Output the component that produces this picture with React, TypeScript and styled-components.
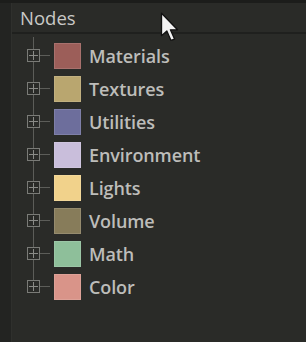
import React from "react";
import styled, { createGlobalStyle } from "styled-components";

const Global = createGlobalStyle`
  html, body { margin: 0; padding: 0; background: #1f201e; }
  body { font-family: "Open Sans", "Liberation Sans", sans-serif; }
`;

const Frame = styled.div`
  width: 306px;
  height: 342px;
  display: flex;
  flex-direction: column;
  background: #1f201e;
  position: relative;
  overflow: hidden;
`;

const TopStrip = styled.div`
  height: 3px;
  background: #1c1d1b;
`;

const Body = styled.div`
  flex: 1;
  display: flex;
`;

const Gutter = styled.div`
  width: 11px;
  background: #232422;
  border-right: 1px solid #2f302d;
`;

const Panel = styled.div`
  flex: 1;
  display: flex;
  flex-direction: column;
  background: #2a2b28;
`;

const Header = styled.div`
  height: 31px;
  display: flex;
  align-items: center;
  padding-left: 8px;
  color: #c9c9c6;
  font-size: 18.5px;
  font-weight: 500;
  letter-spacing: 0;
  border-bottom: 2px solid #1f201e;
  box-sizing: border-box;
`;

const Tree = styled.div`
  position: relative;
  display: flex;
  flex-direction: column;
  padding-top: 5px;
`;

const TreeLine = styled.div`
  position: absolute;
  left: 21px;
  top: 3px;
  bottom: 12px;
  width: 1px;
  background: #5c5d59;
`;

const Row = styled.div`
  height: 33px;
  display: flex;
  align-items: center;
  position: relative;
`;

const Expander = styled.div`
  margin-left: 15px;
  width: 13px;
  height: 13px;
  box-sizing: border-box;
  border: 1px solid #7a7b77;
  background: #2a2b28;
  position: relative;
  z-index: 1;
  &::before {
    content: "";
    position: absolute;
    left: 1px; right: 1px; top: 5px;
    height: 1px;
    background: #8a8b87;
  }
  &::after {
    content: "";
    position: absolute;
    top: 1px; bottom: 1px; left: 5px;
    width: 1px;
    background: #8a8b87;
  }
`;

const Tick = styled.div`
  width: 10px;
  height: 1px;
  background: #5c5d59;
  margin-right: 4px;
`;

const Swatch = styled.div<{ $c: string }>`
  width: 27px;
  height: 26px;
  box-sizing: border-box;
  background: ${(p) => p.$c};
  border: 1px solid rgba(255, 255, 255, 0.12);
`;

const Label = styled.span`
  margin-left: 8px;
  font-size: 18px;
  font-weight: 600;
  color: #bdbdba;
  letter-spacing: -0.1px;
`;

const Cursor = styled.svg`
  position: absolute;
  left: 160px;
  top: 12px;
`;

const items: [string, string][] = [
  ["Materials", "#9c5e59"],
  ["Textures", "#b9a66f"],
  ["Utilities", "#6d6e9c"],
  ["Environment", "#c9bedb"],
  ["Lights", "#f1d28b"],
  ["Volume", "#877c5a"],
  ["Math", "#8ebf9a"],
  ["Color", "#d99489"],
];

export default function App() {
  return (
    <Frame>
      <Global />
      <TopStrip />
      <Body>
        <Gutter />
        <Panel>
          <Header>Nodes</Header>
          <Tree>
            <TreeLine />
            {items.map(([name, c]) => (
              <Row key={name}>
                <Expander />
                <Tick />
                <Swatch $c={c} />
                <Label>{name}</Label>
              </Row>
            ))}
          </Tree>
        </Panel>
      </Body>
      <Cursor width="22" height="32" viewBox="0 0 18 27">
        <path
          d="M1 1 L1 20 L5.5 16 L9 24 L12 22.8 L8.5 15 L14.5 15 Z"
          fill="#f2f2f2"
          stroke="#111"
          strokeWidth="1.1"
          strokeLinejoin="round"
        />
      </Cursor>
    </Frame>
  );
}
